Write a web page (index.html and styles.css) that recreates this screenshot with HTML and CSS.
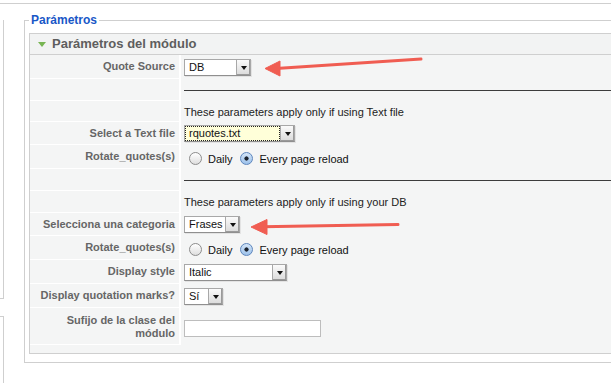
FILE: index.html
```html
<!DOCTYPE html>
<html lang="es">
<head>
<meta charset="utf-8">
<title>Parámetros</title>
<link rel="stylesheet" href="styles.css">
</head>
<body>
<div class="topline"></div>
<div class="layout">
  <aside class="side">
    <div class="sbox sbox-1"></div>
    <div class="sbox sbox-2"></div>
  </aside>
  <main class="main">
    <fieldset class="params">
      <legend>Parámetros</legend>
      <div class="panel">
        <h3 class="panel-head"><span class="tri"></span>Parámetros del módulo</h3>
        <table class="ptable">
          <tr class="h24">
            <td class="label">Quote Source</td>
            <td class="val"><span class="sel sel-db"><span class="v">DB</span><span class="b"><i></i></span></span></td>
          </tr>
          <tr class="h22">
            <td class="label"></td>
            <td class="val"><hr class="rule"></td>
          </tr>
          <tr class="h21">
            <td class="label"></td>
            <td class="val">These parameters apply only if using Text file</td>
          </tr>
          <tr class="h23">
            <td class="label">Select a Text file</td>
            <td class="val"><span class="sel sel-txt focus"><span class="v">rquotes.txt</span><span class="b"><i></i></span></span></td>
          </tr>
          <tr class="h24">
            <td class="label">Rotate_quotes(s)</td>
            <td class="val"><div class="radios"><span class="radio"></span><span class="rl">Daily</span><span class="radio on"></span><span class="rl">Every page reload</span></div></td>
          </tr>
          <tr class="h22">
            <td class="label"></td>
            <td class="val"><hr class="rule"></td>
          </tr>
          <tr class="h22">
            <td class="label"></td>
            <td class="val">These parameters apply only if using your DB</td>
          </tr>
          <tr class="h23">
            <td class="label">Selecciona una categoria</td>
            <td class="val"><span class="sel sel-cat"><span class="v">Frases</span><span class="b"><i></i></span></span></td>
          </tr>
          <tr class="h24">
            <td class="label">Rotate_quotes(s)</td>
            <td class="val"><div class="radios"><span class="radio"></span><span class="rl">Daily</span><span class="radio on"></span><span class="rl">Every page reload</span></div></td>
          </tr>
          <tr class="h24">
            <td class="label">Display style</td>
            <td class="val"><span class="sel sel-style"><span class="v">Italic</span><span class="b"><i></i></span></span></td>
          </tr>
          <tr class="h24">
            <td class="label">Display quotation marks?</td>
            <td class="val"><span class="sel sel-si"><span class="v">Sí</span><span class="b"><i></i></span></span></td>
          </tr>
          <tr class="h35">
            <td class="label">Sufijo de la clase del módulo</td>
            <td class="val"><span class="field"></span></td>
          </tr>
        </table>
      </div>
    </fieldset>
  </main>
</div>
<svg class="arrows" width="611" height="383" viewBox="0 0 611 383" aria-hidden="true">
  <g fill="#f05d52" stroke="#f05d52">
    <line x1="421" y1="59" x2="276" y2="68.5" stroke-width="3" stroke-linecap="round"/>
    <polygon points="265,68.5 280,61 280,76" stroke-width="1" stroke-linejoin="round"/>
    <line x1="398" y1="224.5" x2="262" y2="226.8" stroke-width="3" stroke-linecap="round"/>
    <polygon points="251,227 267,219.5 267,234.5" stroke-width="1" stroke-linejoin="round"/>
  </g>
</svg>
</body>
</html>
```
FILE: styles.css
```css
html, body {
  margin: 0;
  padding: 0;
  background: #fff;
  overflow: hidden;
  font-family: "Liberation Sans", Arial, sans-serif;
  color: #222;
}
body {
  position: relative;
  width: 611px;
  height: 383px;
}
.topline {
  height: 3px;
  border-bottom: 1px solid #cfcfcf;
}
.layout {
  display: flex;
  width: 611px;
}
.side {
  width: 4px;
  flex: none;
}
.sbox {
  width: 3px;
  border-right: 1px solid #cfcfcf;
}
.sbox-1 {
  margin-top: 16px;
  height: 278px;
  border-bottom: 1px solid #cfcfcf;
}
.sbox-2 {
  margin-top: 17px;
  height: 66px;
  border-top: 1px solid #cfcfcf;
}
.main {
  flex: 1;
  min-width: 0;
  margin-left: 21px;
}
.params {
  margin: 9px 0 0 -1px;
  padding: 5px 0 8px 4px;
  border: 1px solid #cfcfcf;
  border-right: 0;
  min-width: 0;
}
.params legend {
  padding: 0 2px;
  font-size: 12px;
  line-height: 15px;
  font-weight: bold;
  color: #1957c7;
}
.panel {
  border: 1px solid #cfcfcf;
  border-right: 0;
  background: #f4f5f5;
  padding-bottom: 8px;
}
.panel-head {
  margin: 0;
  height: 20px;
  line-height: 20px;
  border-bottom: 1px solid #cfcfcf;
  background: #f2f3f3;
  font-size: 13px;
  font-weight: bold;
  color: #5e5e5e;
  display: flex;
  align-items: center;
}
.tri {
  width: 0;
  height: 0;
  border-left: 4px solid transparent;
  border-right: 4px solid transparent;
  border-top: 5px solid #78b553;
  margin: 1px 6px 0 8px;
}
.ptable {
  width: 100%;
  border-collapse: separate;
  border-spacing: 0;
  font-size: 11px;
}
.ptable td {
  padding: 0;
  vertical-align: middle;
}
.label {
  width: 145px;
  padding-right: 4px !important;
  border-right: 2px solid #fff;
  border-bottom: 1px solid #fff;
  text-align: right;
  font-weight: bold;
  color: #666;
  line-height: 13px;
}
.val {
  padding-left: 3px !important;
  color: #222;
}
.h24 td { height: 23px; }
.h23 td { height: 22px; }
.h22 td { height: 21px; }
.h21 td { height: 20px; }
.h35 td { height: 34px; padding-top: 2px !important; }
.rule {
  margin: 0;
  height: 0;
  border: 0;
  border-top: 1px solid #3c3c3c;
}
.sel {
  display: inline-flex;
  box-sizing: border-box;
  height: 17px;
  border: 1px solid #a8a8a8;
  border-bottom-color: #8f8f8f;
  background: #fff;
  vertical-align: middle;
  box-shadow: 1px 1px 0 #e3e3e3;
}
.sel .v {
  flex: 1;
  padding-left: 4px;
  line-height: 15px;
  font-size: 11px;
  color: #111;
}
.sel .b {
  width: 13px;
  border-left: 1px solid #a8a8a8;
  background: linear-gradient(#fbfbfb, #dadada);
  box-shadow: inset -1px -1px 0 #9a9a9a;
  display: flex;
  align-items: center;
  justify-content: center;
}
.sel .b i {
  width: 0;
  height: 0;
  border-left: 3px solid transparent;
  border-right: 3px solid transparent;
  border-top: 4px solid #111;
  margin-top: 1px;
}
.sel-db { width: 67px; }
.sel-txt { width: 111px; }
.sel-cat { width: 56px; }
.sel-style { width: 103px; }
.sel-si { width: 39px; }
.sel.focus .v {
  background: #ffffd9;
  outline: 1px dotted #222;
  outline-offset: -1px;
}
.radios {
  display: flex;
  align-items: center;
  padding: 3px 0 0 5px;
}
.radio {
  width: 13px;
  height: 13px;
  box-sizing: border-box;
  border-radius: 50%;
  border: 1px solid #8c8c8c;
  background: linear-gradient(#ffffff, #dedede);
}
.radio.on {
  border-color: #5d86bd;
  background: radial-gradient(circle, #1c2430 0 1.8px, transparent 2.4px), linear-gradient(#d4e5f8, #9cc1ea);
}
.rl {
  margin: 0 8px 0 6px;
  font-size: 11px;
  color: #111;
}
.field {
  display: inline-block;
  vertical-align: middle;
  box-sizing: border-box;
  width: 137px;
  height: 17px;
  border: 1px solid #bdbdbd;
  background: #fff;
  margin-top: 1px;
}
.arrows {
  position: absolute;
  left: 0;
  top: 0;
  pointer-events: none;
}
```
